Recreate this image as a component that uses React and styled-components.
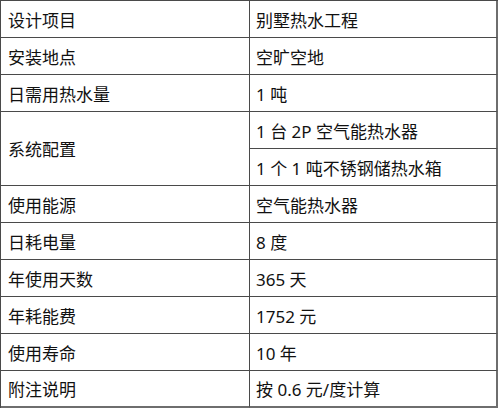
import React from 'react'
import styled, { createGlobalStyle } from 'styled-components'

const GlobalStyle = createGlobalStyle`
   body{
      margin: 0;
      background: #fff;
   }
`

const rows = [
   { label: '设计项目', values: ['别墅热水工程'] },
   { label: '安装地点', values: ['空旷空地'] },
   { label: '日需用热水量', values: ['1 吨'] },
   { label: '系统配置', values: ['1 台 2P 空气能热水器', '1 个 1 吨不锈钢储热水箱'] },
   { label: '使用能源', values: ['空气能热水器'] },
   { label: '日耗电量', values: ['8 度'] },
   { label: '年使用天数', values: ['365 天'] },
   { label: '年耗能费', values: ['1752 元'] },
   { label: '使用寿命', values: ['10 年'] },
   { label: '附注说明', values: ['按 0.6 元/度计算'] },
]

const App = () => {
   const total = rows.reduce((n, r) => n + r.values.length, 0)
   let line = 0
   return (
      <>
         <GlobalStyle />
         <Sheet>
            {rows.map((row) => {
               const start = line
               line += row.values.length
               return (
                  <React.Fragment key={row.label}>
                     <LabelCell span={row.values.length} last={line === total}>
                        {row.label}
                     </LabelCell>
                     {row.values.map((v, i) => (
                        <ValueCell key={v} last={start + i + 1 === total}>
                           {v}
                        </ValueCell>
                     ))}
                  </React.Fragment>
               )
            })}
         </Sheet>
      </>
   )
}

const Sheet = styled.div`
   display: grid;
   grid-template-columns: 249px 248px;
   grid-auto-rows: 37px;
   width: max-content;
   border-top: 1px solid #4a4a4a;
   border-left: 1px solid #4a4a4a;
   font-family: "Noto Sans", "Noto Sans CJK SC", sans-serif;
   font-size: 17px;
   color: #111;
`

const Cell = styled.div`
   display: flex;
   align-items: center;
   padding: 0 6px;
   box-sizing: border-box;
   white-space: nowrap;
   border-bottom: ${(p) => (p.last ? '2px solid #6e6e6e' : '1px solid #4a4a4a')};
`

const LabelCell = styled(Cell)`
   grid-row: span ${(p) => p.span};
   padding-left: 7px;
   border-right: 1px solid #4a4a4a;
`

const ValueCell = styled(Cell)`
   border-right: 2px solid #6e6e6e;
`

export default App
